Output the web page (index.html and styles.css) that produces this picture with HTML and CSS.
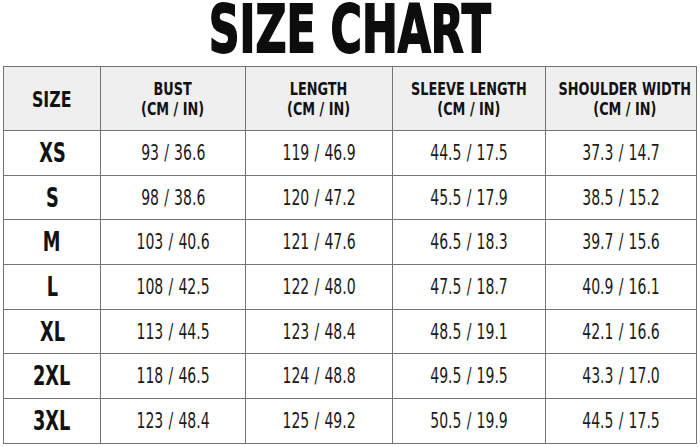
FILE: index.html
```html
<!DOCTYPE html>
<html>
<head>
<meta charset="utf-8">
<link rel="stylesheet" href="styles.css">
</head>
<body>
<div class="page">
  <h1 class="title"><span class="title-text">SIZE CHART</span></h1>
  <table class="chart">
    <colgroup>
      <col class="c-size"><col class="c-bust"><col class="c-len"><col class="c-sleeve"><col class="c-shoulder">
    </colgroup>
    <thead>
      <tr>
        <th><span class="hs">SIZE</span></th>
        <th><span class="h">BUST<br>(CM / IN)</span></th>
        <th><span class="h">LENGTH<br>(CM / IN)</span></th>
        <th><span class="h">SLEEVE LENGTH<br>(CM / IN)</span></th>
        <th><span class="h">SHOULDER WIDTH<br>(CM / IN)</span></th>
      </tr>
    </thead>
    <tbody>
      <tr><td><span class="sz">XS</span></td><td><span class="v">93 / 36.6</span></td><td><span class="v">119 / 46.9</span></td><td><span class="v">44.5 / 17.5</span></td><td><span class="v">37.3 / 14.7</span></td></tr>
      <tr><td><span class="sz">S</span></td><td><span class="v">98 / 38.6</span></td><td><span class="v">120 / 47.2</span></td><td><span class="v">45.5 / 17.9</span></td><td><span class="v">38.5 / 15.2</span></td></tr>
      <tr><td><span class="sz">M</span></td><td><span class="v">103 / 40.6</span></td><td><span class="v">121 / 47.6</span></td><td><span class="v">46.5 / 18.3</span></td><td><span class="v">39.7 / 15.6</span></td></tr>
      <tr><td><span class="sz">L</span></td><td><span class="v">108 / 42.5</span></td><td><span class="v">122 / 48.0</span></td><td><span class="v">47.5 / 18.7</span></td><td><span class="v">40.9 / 16.1</span></td></tr>
      <tr><td><span class="sz">XL</span></td><td><span class="v">113 / 44.5</span></td><td><span class="v">123 / 48.4</span></td><td><span class="v">48.5 / 19.1</span></td><td><span class="v">42.1 / 16.6</span></td></tr>
      <tr><td><span class="sz">2XL</span></td><td><span class="v">118 / 46.5</span></td><td><span class="v">124 / 48.8</span></td><td><span class="v">49.5 / 19.5</span></td><td><span class="v">43.3 / 17.0</span></td></tr>
      <tr><td><span class="sz">3XL</span></td><td><span class="v">123 / 48.4</span></td><td><span class="v">125 / 49.2</span></td><td><span class="v">50.5 / 19.9</span></td><td><span class="v">44.5 / 17.5</span></td></tr>
    </tbody>
  </table>
</div>
</body>
</html>
```
FILE: styles.css
```css
* { box-sizing: border-box; }
html, body {
  margin: 0;
  padding: 0;
  background: #fff;
}
body {
  width: 700px;
  height: 447px;
  overflow: hidden;
  font-family: "DejaVu Sans Condensed", "DejaVu Sans", sans-serif;
  color: #111;
}
.page {
  padding: 2px 0 0 3px;
}
.title {
  margin: 0;
  height: 56px;
  line-height: 56px;
  font-size: 66px;
  font-weight: bold;
  text-align: center;
  width: 693px;
  color: #0d0d0d;
}
.title-text {
  display: inline-block;
  transform: scaleX(0.72);
  -webkit-text-stroke: 1.8px #0d0d0d;
}
.chart {
  margin-top: 8px;
  width: 693px;
  border-collapse: collapse;
  table-layout: fixed;
}
.c-size { width: 97px; }
.c-bust { width: 145px; }
.c-len { width: 147px; }
.c-sleeve { width: 153px; }
.c-shoulder { width: 151px; }
.chart th, .chart td {
  border: 1.5px solid #747474;
  text-align: center;
  padding: 0;
  white-space: nowrap;
}
.chart th {
  background: #efefef;
  height: 64px;
  font-weight: bold;
}
.chart td {
  height: 44.7px;
}
.hs {
  display: inline-block;
  font-size: 22px;
  font-weight: bold;
  transform: scaleX(0.8);
  position: relative;
  top: 1px;
}
.h {
  display: inline-block;
  font-size: 17px;
  line-height: 20px;
  font-weight: bold;
  transform: scaleX(0.84);
}
.sz {
  display: inline-block;
  font-size: 26px;
  font-weight: bold;
  transform: scaleX(0.76);
}
.v {
  display: inline-block;
  font-size: 20.5px;
  font-weight: normal;
  word-spacing: 1px;
  transform: scaleX(0.76);
  color: #1a1a1a;
}
```
